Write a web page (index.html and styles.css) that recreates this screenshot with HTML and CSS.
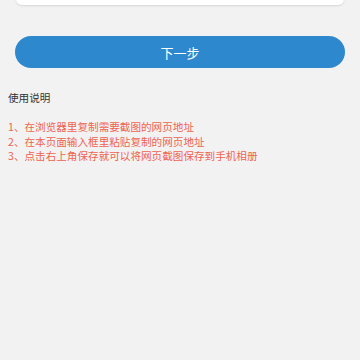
FILE: index.html
```html
<!DOCTYPE html>
<html lang="zh">
<head>
  <meta charset="UTF-8">
  <meta name="viewport" content="width=device-width, initial-scale=1.0">
  <title>网页截图</title>
  <link rel="stylesheet" href="styles.css">
</head>
<body>
  <div class="input-card"></div>

  <div class="btn-wrap">
    <button class="next-button">下一步</button>
  </div>

  <div class="guide">
    <h3>使用说明</h3>
    <ul class="steps">
      <li>1、在浏览器里复制需要截图的网页地址</li>
      <li>2、在本页面输入框里粘贴复制的网页地址</li>
      <li>3、点击右上角保存就可以将网页截图保存到手机相册</li>
    </ul>
  </div>
</body>
</html>
```

FILE: styles.css
```css
body {
  font-family: 'Noto Sans CJK SC', 'Noto Sans', sans-serif;
  margin: 0;
  padding: 0;
  background-color: #f2f2f2;
}

.input-card {
  background-color: white;
  margin: -20px 16px 0 16px;
  height: 25px;
  border-radius: 6px;
  box-shadow: 0 1px 2px rgba(0, 0, 0, 0.12);
}

.btn-wrap {
  padding: 31px 15px 0 15px;
}

.next-button {
  display: block;
  width: 100%;
  height: 32px;
  border: none;
  border-radius: 16px;
  background-color: #2d88cd;
  color: white;
  font-family: inherit;
  font-size: 13px;
  padding: 0;
}

.guide {
  padding: 22px 8px 0 8px;
}

.guide h3 {
  margin: 0;
  font-size: 10.6px;
  font-weight: normal;
  color: #333;
  line-height: 16px;
}

.steps {
  list-style: none;
  margin: 14px 0 0 0;
  padding: 0;
  color: #ee6450;
  font-size: 10.6px;
  line-height: 14.5px;
}
```
